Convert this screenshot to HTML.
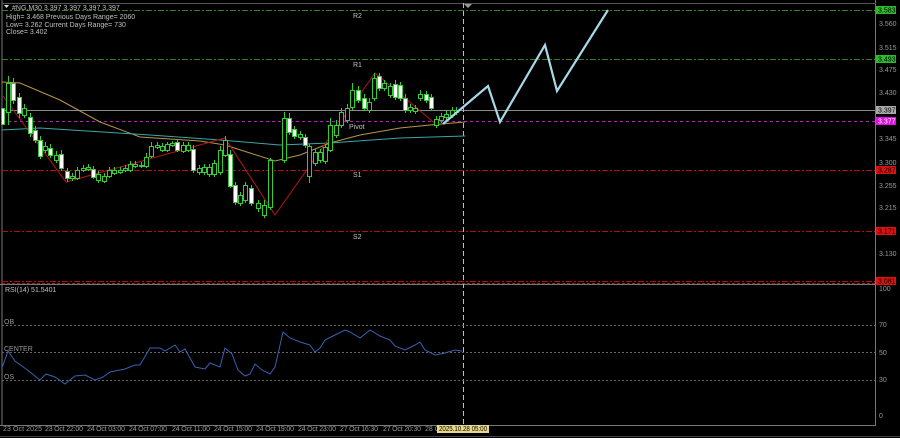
<!DOCTYPE html>
<html><head><meta charset="utf-8"><style>
html,body{margin:0;padding:0;background:#000;width:900px;height:438px;overflow:hidden}
svg{display:block}
text{font-family:"Liberation Sans",sans-serif;font-size:7px;fill:#c0c0c0}
text.k{fill:#000}
text.wh{fill:#fff}
text.g{fill:#999}
.w{fill:#fff;stroke:#3c3;stroke-width:1}
.b{fill:#000;stroke:#3c3;stroke-width:1}
</style></head><body>
<svg width="900" height="438" viewBox="0 0 900 438" xmlns="http://www.w3.org/2000/svg">
<rect width="900" height="438" fill="#000"/>
<line x1="2" y1="0" x2="2" y2="425" stroke="#777"/>
<line x1="875.5" y1="0" x2="875.5" y2="425" stroke="#777"/>
<line x1="0" y1="284.5" x2="876" y2="284.5" stroke="#777"/>
<line x1="0" y1="425.5" x2="876" y2="425.5" stroke="#777"/>
<line x1="2" y1="3.5" x2="876" y2="3.5" stroke="#555"/>
<g stroke-width="1" fill="none">
<line x1="2" y1="10.5" x2="875" y2="10.5" stroke="#3a7a2a" stroke-dasharray="6,2,2,2"/>
<line x1="2" y1="59.5" x2="875" y2="59.5" stroke="#3a7a2a" stroke-dasharray="6,2,2,2"/>
<line x1="2" y1="110.5" x2="875" y2="110.5" stroke="#8a8a8a"/>
<line x1="2" y1="121.5" x2="875" y2="121.5" stroke="#b020b0" stroke-dasharray="3,3"/>
<line x1="2" y1="170.5" x2="875" y2="170.5" stroke="#b01010" stroke-dasharray="6,2,2,2"/>
<line x1="2" y1="231.5" x2="875" y2="231.5" stroke="#b01010" stroke-dasharray="6,2,2,2"/>
<line x1="2" y1="281.5" x2="875" y2="281.5" stroke="#b01010" stroke-dasharray="6,2,2,2"/>
<line x1="463.5" y1="3" x2="463.5" y2="425" stroke="#bbb" stroke-dasharray="5,3"/>
</g>
<text x="353" y="18">R2</text>
<text x="353" y="67">R1</text>
<text x="349" y="129">Pivot</text>
<text x="353" y="177">S1</text>
<text x="353" y="239">S2</text>
<polyline fill="none" stroke="#b8954a" stroke-width="1" points="2,82 20,83 60,100 100,122 140,137 200,141 225,145 250,153 275,161 300,155 330,143 360,135 400,128 430,125 465,122"/>
<polyline fill="none" stroke="#3aa7a7" stroke-width="1" points="2,130 40,128 150,135 220,140 280,145 330,143 400,138 465,136"/>
<polyline fill="none" stroke="#b01818" stroke-width="1" points="3,96 66,182 225,138 275,215 375,73 437,125"/>
<path stroke="#3c3" stroke-width="1" fill="none" d="M8.5 76V125M13.5 78V104M19.5 93V118M24.5 104V118M30.5 113V137M35.5 126V143M40.5 136V159M45.5 142V153M50.5 144V158M56.5 151V163M61.5 150V171M67.5 168V182M72.5 173V181M77.5 167V180M83.5 165V172M88.5 164V171M93.5 166V179M98.5 171V183M104.5 173V183M109.5 167V178M114.5 167V175M120.5 167V174M125.5 165V172M130.5 161V172M135.5 161V168M141.5 162V168M146.5 153V168M151.5 142V158M157.5 142V149M162.5 143V152M167.5 142V152M172.5 141V147M177.5 139V152M183.5 142V153M188.5 142V152M193.5 145V173M199.5 165V175M204.5 164V175M209.5 164V177M214.5 160V177M220.5 146V175M225.5 136V157M230.5 150V188M235.5 182V205M240.5 192V206M245.5 182V203M251.5 185V206M258.5 200V212M264.5 200V218M270.5 158V210M284.5 112V163M289.5 113V135M294.5 126V139M300.5 131V140M305.5 134V148M309.5 144V183M315.5 149V166M320.5 149V163M325.5 144V164M330.5 118V152M336.5 120V138M341.5 108V128M347.5 104V123M352.5 83V110M358.5 86V103M364.5 94V111M369.5 98V113M374.5 73V101M379.5 73V91M384.5 80V91M390.5 83V98M395.5 80V100M400.5 82V101M405.5 94V113M410.5 104V113M415.5 105V114M420.5 90V101M426.5 91V103M431.5 94V111M436.5 116V128M441.5 113V123M446.5 111V120M452.5 107V118M456.5 107V115"/>
<g>
<rect class="w" x="1.5" y="108.5" width="3" height="16"/>
<rect class="b" x="6.5" y="83.5" width="4" height="29"/>
<rect class="w" x="11.5" y="83.5" width="4" height="17"/>
<rect class="w" x="17.5" y="97.5" width="4" height="16"/>
<rect class="b" x="22.5" y="108.5" width="4" height="7"/>
<rect class="w" x="28.5" y="117.5" width="4" height="16"/>
<rect class="w" x="33.5" y="130.5" width="4" height="10"/>
<rect class="w" x="38.5" y="140.5" width="4" height="16"/>
<rect class="b" x="43.5" y="146.5" width="4" height="4"/>
<rect class="w" x="48.5" y="148.5" width="4" height="7"/>
<rect class="b" x="54.5" y="155.5" width="4" height="5"/>
<rect class="w" x="59.5" y="154.5" width="4" height="14"/>
<rect class="w" x="65.5" y="171.5" width="4" height="7"/>
<rect class="b" x="70.5" y="176.5" width="4" height="2"/>
<rect class="b" x="75.5" y="170.5" width="4" height="8"/>
<rect class="b" x="81.5" y="168.5" width="4" height="2"/>
<rect class="b" x="86.5" y="167.5" width="4" height="2"/>
<rect class="w" x="91.5" y="169.5" width="4" height="8"/>
<rect class="b" x="96.5" y="174.5" width="4" height="6"/>
<rect class="b" x="102.5" y="176.5" width="4" height="5"/>
<rect class="b" x="107.5" y="170.5" width="4" height="6"/>
<rect class="b" x="112.5" y="170.5" width="4" height="3"/>
<rect class="b" x="118.5" y="170.5" width="4" height="2"/>
<rect class="b" x="123.5" y="168.5" width="4" height="2"/>
<rect class="b" x="128.5" y="164.5" width="4" height="6"/>
<rect class="b" x="133.5" y="164.5" width="4" height="2"/>
<rect class="b" x="139.5" y="165.5" width="4" height="1"/>
<rect class="b" x="144.5" y="157.5" width="4" height="9"/>
<rect class="b" x="149.5" y="146.5" width="4" height="10"/>
<rect class="b" x="155.5" y="145.5" width="4" height="2"/>
<rect class="b" x="160.5" y="146.5" width="4" height="4"/>
<rect class="b" x="165.5" y="144.5" width="4" height="6"/>
<rect class="b" x="170.5" y="143.5" width="4" height="2"/>
<rect class="w" x="175.5" y="142.5" width="4" height="8"/>
<rect class="b" x="181.5" y="145.5" width="4" height="6"/>
<rect class="b" x="186.5" y="145.5" width="4" height="5"/>
<rect class="w" x="191.5" y="149.5" width="4" height="21"/>
<rect class="b" x="197.5" y="168.5" width="4" height="4"/>
<rect class="b" x="202.5" y="167.5" width="4" height="5"/>
<rect class="b" x="207.5" y="167.5" width="4" height="7"/>
<rect class="b" x="212.5" y="163.5" width="4" height="11"/>
<rect class="b" x="218.5" y="150.5" width="4" height="22"/>
<rect class="b" x="223.5" y="140.5" width="4" height="15"/>
<rect class="w" x="228.5" y="154.5" width="4" height="32"/>
<rect class="w" x="233.5" y="185.5" width="4" height="17"/>
<rect class="b" x="238.5" y="195.5" width="4" height="8"/>
<rect class="b" x="243.5" y="185.5" width="4" height="15"/>
<rect class="w" x="249.5" y="188.5" width="4" height="15"/>
<rect class="b" x="256.5" y="203.5" width="4" height="5"/>
<rect class="b" x="262.5" y="205.5" width="4" height="10"/>
<rect class="b" x="268.5" y="160.5" width="4" height="47"/>
<rect class="b" x="282.5" y="118.5" width="4" height="42"/>
<rect class="w" x="287.5" y="118.5" width="4" height="14"/>
<rect class="w" x="292.5" y="129.5" width="4" height="7"/>
<rect class="b" x="298.5" y="134.5" width="4" height="3"/>
<rect class="w" x="303.5" y="137.5" width="4" height="8"/>
<rect class="b" x="307.5" y="146.5" width="4" height="30"/>
<rect class="b" x="313.5" y="152.5" width="4" height="11"/>
<rect class="b" x="318.5" y="152.5" width="4" height="8"/>
<rect class="b" x="323.5" y="147.5" width="4" height="14"/>
<rect class="b" x="328.5" y="125.5" width="4" height="25"/>
<rect class="b" x="334.5" y="125.5" width="4" height="10"/>
<rect class="b" x="339.5" y="112.5" width="4" height="13"/>
<rect class="b" x="345.5" y="108.5" width="4" height="12"/>
<rect class="b" x="350.5" y="90.5" width="4" height="17"/>
<rect class="w" x="356.5" y="90.5" width="4" height="10"/>
<rect class="w" x="362.5" y="98.5" width="4" height="10"/>
<rect class="b" x="367.5" y="102.5" width="4" height="8"/>
<rect class="b" x="372.5" y="78.5" width="4" height="20"/>
<rect class="w" x="377.5" y="76.5" width="4" height="12"/>
<rect class="b" x="382.5" y="83.5" width="4" height="5"/>
<rect class="b" x="388.5" y="86.5" width="4" height="9"/>
<rect class="w" x="393.5" y="84.5" width="4" height="13"/>
<rect class="w" x="398.5" y="85.5" width="4" height="13"/>
<rect class="w" x="403.5" y="98.5" width="4" height="12"/>
<rect class="b" x="408.5" y="107.5" width="4" height="3"/>
<rect class="b" x="413.5" y="108.5" width="4" height="3"/>
<rect class="b" x="418.5" y="94.5" width="4" height="4"/>
<rect class="w" x="424.5" y="94.5" width="4" height="6"/>
<rect class="w" x="429.5" y="97.5" width="4" height="11"/>
<rect class="b" x="434.5" y="119.5" width="4" height="6"/>
<rect class="b" x="439.5" y="116.5" width="4" height="4"/>
<rect class="b" x="444.5" y="114.5" width="4" height="3"/>
<rect class="b" x="450.5" y="110.5" width="4" height="5"/>
<rect class="b" x="454.5" y="110.5" width="4" height="2"/>
</g>
<polyline fill="none" stroke="#a8d8e8" stroke-width="2.2" points="443,124 488,86 500,122 545,45 557,91 608,10"/>
<path d="M464 4h8l-4 4z" fill="#999"/>
<path d="M4 5h5l-2.5 3z" fill="#ddd"/>
<text x="12" y="10">#NG,M30  3.397 3.397 3.397 3.397</text>
<text x="6" y="19">High= 3.468    Previous Days Range= 2060</text>
<text x="6" y="27">Low= 3.262    Current Days Range= 730</text>
<text x="6" y="34">Close= 3.402</text>
<text class="g" x="879" y="26">3.560</text><text class="g" x="879" y="50">3.515</text>
<text class="g" x="879" y="72">3.475</text><text class="g" x="879" y="95">3.430</text>
<text class="g" x="879" y="141">3.345</text><text class="g" x="879" y="165">3.300</text>
<text class="g" x="879" y="188">3.255</text><text class="g" x="879" y="210">3.215</text>
<text class="g" x="879" y="256">3.130</text>
<rect x="876" y="6" width="20" height="8" fill="#2dbb2d"/><text class="k" x="878" y="12.5">3.583</text>
<rect x="876" y="55" width="20" height="8" fill="#2dbb2d"/><text class="k" x="878" y="61.5">3.493</text>
<rect x="876" y="106" width="20" height="8" fill="#aaa"/><text class="k" x="878" y="112.5">3.397</text>
<rect x="876" y="117" width="20" height="8" fill="#e010e0"/><text class="wh" x="878" y="123.5">3.377</text>
<rect x="876" y="166" width="20" height="8" fill="#e01010"/><text class="k" x="878" y="172.5">3.287</text>
<rect x="876" y="227" width="20" height="8" fill="#e01010"/><text class="k" x="878" y="233.5">3.171</text>
<rect x="876" y="277" width="20" height="8" fill="#e01010"/><text class="k" x="878" y="283.5">3.081</text>
<line x1="2" y1="283.5" x2="875" y2="283.5" stroke="#a02020" stroke-dasharray="3,2"/>
<text x="5" y="292">RSI(14) 51.5401</text>
<g stroke="#666" stroke-dasharray="2,2">
<line x1="2" y1="325.5" x2="875" y2="325.5"/>
<line x1="2" y1="352.5" x2="875" y2="352.5"/>
<line x1="2" y1="380.5" x2="875" y2="380.5"/>
</g>
<text class="g" x="4" y="324">OB</text>
<text class="g" x="4" y="351">CENTER</text>
<text class="g" x="4" y="379">OS</text>
<text class="g" x="879" y="291">100</text><text class="g" x="879" y="327">70</text>
<text class="g" x="879" y="355">50</text><text class="g" x="879" y="382">30</text>
<text class="g" x="879" y="418">0</text>
<polyline fill="none" stroke="#3a60b0" stroke-width="1" points="2,368 8,351 15,361 22,366 30,372 40,380 46,374 55,377 65,384 75,376 85,375 95,380 103,377 110,372 125,369 135,365 140,365 150,348 160,348 165,351 175,345 180,352 185,349 195,367 205,369 210,363 220,367 225,348 232,354 238,370 245,376 250,374 255,364 262,370 270,374 275,367 283,332 290,338 300,342 310,345 315,352 320,348 325,340 335,335 345,330 350,332 360,338 370,330 380,336 390,340 395,346 405,350 415,345 420,342 425,350 435,355 445,353 455,350 462,351"/>
<text class="g" x="3" y="431" textLength="39">23 Oct 2025</text><text class="g" x="45" y="431" textLength="38">23 Oct 22:00</text>
<text class="g" x="87" y="431" textLength="38">24 Oct 03:00</text><text class="g" x="129" y="431" textLength="38">24 Oct 07:00</text>
<text class="g" x="172" y="431" textLength="38">24 Oct 11:00</text><text class="g" x="214" y="431" textLength="38">24 Oct 15:00</text>
<text class="g" x="256" y="431" textLength="38">24 Oct 19:00</text><text class="g" x="298" y="431" textLength="38">24 Oct 23:00</text>
<text class="g" x="340" y="431" textLength="38">27 Oct 16:30</text><text class="g" x="383" y="431" textLength="38">27 Oct 20:30</text>
<text class="g" x="425" y="431">28 O</text>
<rect x="437" y="425" width="52" height="8" fill="#e8d888"/>
<text class="k" x="439" y="431" textLength="48" lengthAdjust="spacingAndGlyphs">2025.10.28 05:00</text>
<line x1="0" y1="436.5" x2="900" y2="436.5" stroke="#444"/>
</svg>
</body></html>
